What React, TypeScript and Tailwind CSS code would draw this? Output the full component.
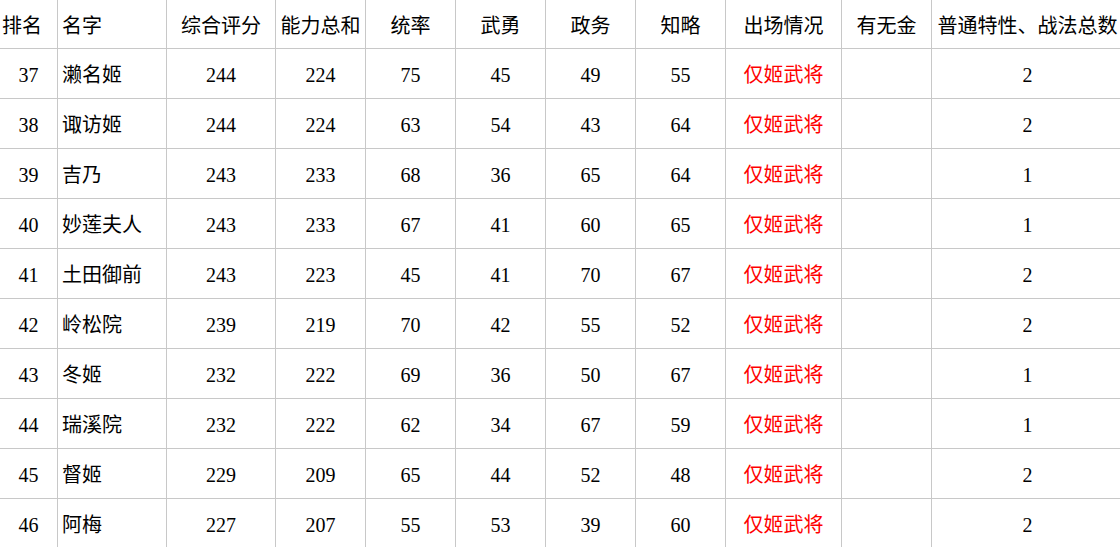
import React from "react";

const rows: [string, string, string, string, string, string, string, string, string, string, string][] = [
  ["37", "濑名姬", "244", "224", "75", "45", "49", "55", "仅姬武将", "", "2"],
  ["38", "诹访姬", "244", "224", "63", "54", "43", "64", "仅姬武将", "", "2"],
  ["39", "吉乃", "243", "233", "68", "36", "65", "64", "仅姬武将", "", "1"],
  ["40", "妙莲夫人", "243", "233", "67", "41", "60", "65", "仅姬武将", "", "1"],
  ["41", "土田御前", "243", "223", "45", "41", "70", "67", "仅姬武将", "", "2"],
  ["42", "岭松院", "239", "219", "70", "42", "55", "52", "仅姬武将", "", "2"],
  ["43", "冬姬", "232", "222", "69", "36", "50", "67", "仅姬武将", "", "1"],
  ["44", "瑞溪院", "232", "222", "62", "34", "67", "59", "仅姬武将", "", "1"],
  ["45", "督姬", "229", "209", "65", "44", "52", "48", "仅姬武将", "", "2"],
  ["46", "阿梅", "227", "207", "55", "53", "39", "60", "仅姬武将", "", "2"],
];

const headers = [
  "排名",
  "名字",
  "综合评分",
  "能力总和",
  "统率",
  "武勇",
  "政务",
  "知略",
  "出场情况",
  "有无金",
  "普通特性、战法总数",
];

const widths = [
  "w-[58px]",
  "w-[109px]",
  "w-[109px]",
  "w-[90px]",
  "w-[90px]",
  "w-[90px]",
  "w-[90px]",
  "w-[90px]",
  "w-[116px]",
  "w-[90px]",
  "w-[192px]",
];

const font =
  "font-['Liberation_Serif','Noto_Sans_CJK_SC',serif]";

export default function App() {
  return (
    <div
      className={`w-[1120px] h-[547px] overflow-hidden bg-white text-black text-[20px] leading-none ${font}`}
    >
      <div className="flex w-[1124px] h-[49px] border-b border-[#c8c8c8]">
        {headers.map((h, i) => (
          <div
            key={i}
            className={`${widths[i]} shrink-0 flex items-center pt-[4px] border-r border-[#c8c8c8] whitespace-nowrap ${
              i === 0
                ? "justify-start pl-[2px]"
                : i === 1
                ? "justify-start pl-[4px]"
                : "justify-center"
            }`}
          >
            {h}
          </div>
        ))}
      </div>
      {rows.map((r, ri) => (
        <div
          key={ri}
          className="flex w-[1124px] h-[50px] border-b border-[#c8c8c8]"
        >
          {r.map((c, i) => (
            <div
              key={i}
              className={`${widths[i]} shrink-0 flex items-center pt-[2px] border-r border-[#c8c8c8] whitespace-nowrap ${
                i === 1 ? "justify-start pl-[4px]" : "justify-center"
              } ${i === 8 ? "text-[#ff0000]" : ""}`}
            >
              {c}
            </div>
          ))}
        </div>
      ))}
    </div>
  );
}
